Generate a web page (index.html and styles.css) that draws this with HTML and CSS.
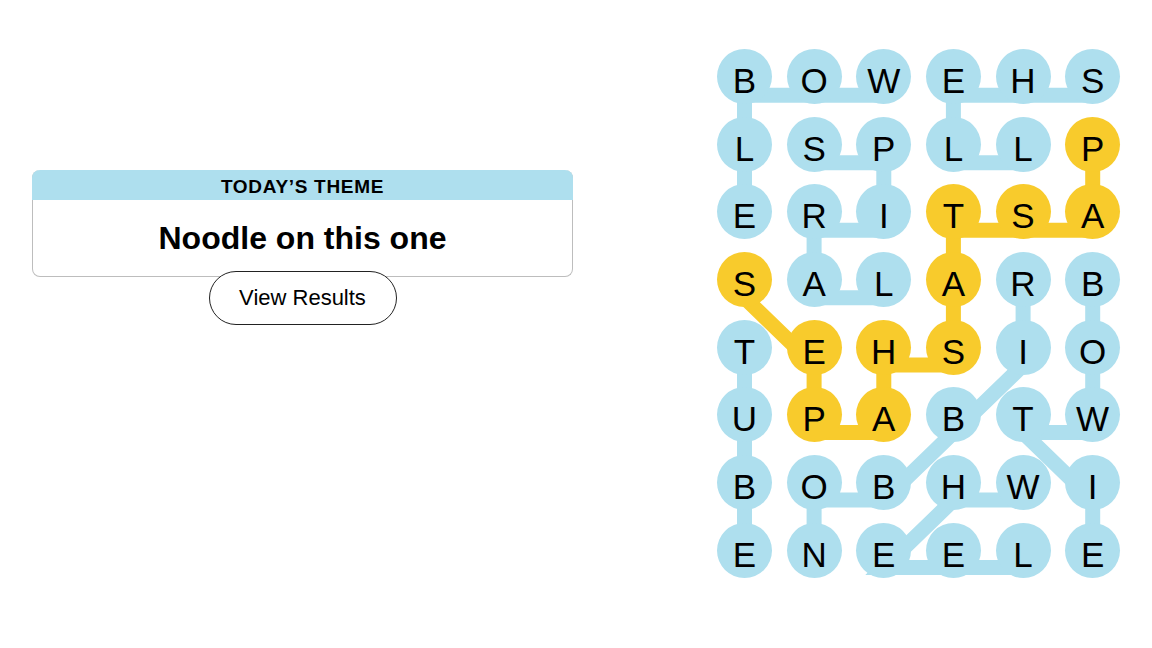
FILE: index.html
```html
<!DOCTYPE html>
<html lang="en">
<head>
<meta charset="utf-8">
<title>Strands</title>
<link rel="stylesheet" href="styles.css">
</head>
<body>
<main class="page">
  <section class="theme-panel">
    <div class="theme-card">
      <h2 class="theme-label">TODAY’S THEME</h2>
      <h1 class="theme-title">Noodle on this one</h1>
    </div>
    <button class="results-btn" type="button">View Results</button>
  </section>
  <section class="board">
    <svg class="paths" width="403" height="540" viewBox="0 0 403 540" aria-hidden="true">
      <g class="path-theme">
        <path d="M27.5 181.2 V46.3 H166.8"/>
        <path d="M375.7 46.3 H236.4 V113.8 H306.1"/>
        <path d="M97.1 113.8 H166.8 V181.2 H97.1 V248.7 H166.8"/>
        <path d="M27.5 316.1 V518.5"/>
        <path d="M306.1 248.7 V316.1 L236.4 383.6 L166.8 451.1 H97.1 V518.5"/>
        <path d="M375.7 248.7 V383.6 H306.1 L375.7 451.1 V518.5"/>
        <path d="M306.1 451.1 H236.4 L166.8 518.5 H306.1"/>
      </g>
      <g class="path-span">
        <path d="M375.7 113.8 V181.2 H236.4 V316.1 H166.8 V383.6 H97.1 V316.1 L27.5 248.7"/>
      </g>
    </svg>
    <div class="grid">
      <div class="cell">B</div><div class="cell">O</div><div class="cell">W</div><div class="cell">E</div><div class="cell">H</div><div class="cell">S</div>
      <div class="cell">L</div><div class="cell">S</div><div class="cell">P</div><div class="cell">L</div><div class="cell">L</div><div class="cell span">P</div>
      <div class="cell">E</div><div class="cell">R</div><div class="cell">I</div><div class="cell span">T</div><div class="cell span">S</div><div class="cell span">A</div>
      <div class="cell span">S</div><div class="cell">A</div><div class="cell">L</div><div class="cell span">A</div><div class="cell">R</div><div class="cell">B</div>
      <div class="cell">T</div><div class="cell span">E</div><div class="cell span">H</div><div class="cell span">S</div><div class="cell">I</div><div class="cell">O</div>
      <div class="cell">U</div><div class="cell span">P</div><div class="cell span">A</div><div class="cell">B</div><div class="cell">T</div><div class="cell">W</div>
      <div class="cell">B</div><div class="cell">O</div><div class="cell">B</div><div class="cell">H</div><div class="cell">W</div><div class="cell">I</div>
      <div class="cell">E</div><div class="cell">N</div><div class="cell">E</div><div class="cell">E</div><div class="cell">L</div><div class="cell">E</div>
    </div>
  </section>
</main>
</body>
</html>
```
FILE: styles.css
```css
html, body {
  margin: 0;
  background: #ffffff;
}

body {
  font-family: "Liberation Sans", Arial, sans-serif;
  color: #000000;
}

.page {
  display: flex;
  align-items: flex-start;
  padding: 49px 0 0 32px;
}

.theme-panel {
  width: 541px;
  margin-top: 121px;
  display: flex;
  flex-direction: column;
  align-items: center;
}

.theme-card {
  width: 100%;
  box-sizing: border-box;
  border: 1px solid #bdbdbd;
  border-top: 0;
  border-radius: 8px;
}

.theme-label {
  margin: 0 -1px;
  height: 30px;
  box-sizing: border-box;
  padding-top: 4px;
  line-height: 26px;
  background: #aedfee;
  border-radius: 8px 8px 0 0;
  font-size: 19px;
  font-weight: 700;
  letter-spacing: 0.7px;
  text-align: center;
}

.theme-title {
  margin: 0;
  height: 76px;
  line-height: 76px;
  font-size: 32px;
  font-weight: 700;
  text-align: center;
}

.results-btn {
  margin-top: -6px;
  width: 188px;
  height: 54px;
  border: 1px solid #222222;
  border-radius: 27px;
  background: #ffffff;
  color: #000000;
  font-family: "Liberation Sans", Arial, sans-serif;
  font-size: 22px;
  padding: 0;
}

.board {
  position: relative;
  margin-left: 144px;
  width: 403px;
}

.paths {
  position: absolute;
  top: 0;
  left: 0;
  overflow: visible;
}

.paths path {
  fill: none;
  stroke-width: 15;
  stroke-linejoin: miter;
  stroke-linecap: butt;
}

.path-theme path {
  stroke: #aedfee;
}

.path-span path {
  stroke: #f8cb2c;
}

.grid {
  display: grid;
  grid-template-columns: repeat(6, 55px);
  grid-template-rows: repeat(8, 55px);
  column-gap: 14.64px;
  row-gap: 12.67px;
}

.cell {
  position: relative;
  width: 55px;
  height: 55px;
  box-sizing: border-box;
  padding-top: 8px;
  border-radius: 50%;
  background: #aedfee;
  font-size: 35px;
  line-height: 47px;
  text-align: center;
}

.cell.span {
  background: #f8cb2c;
}
```
